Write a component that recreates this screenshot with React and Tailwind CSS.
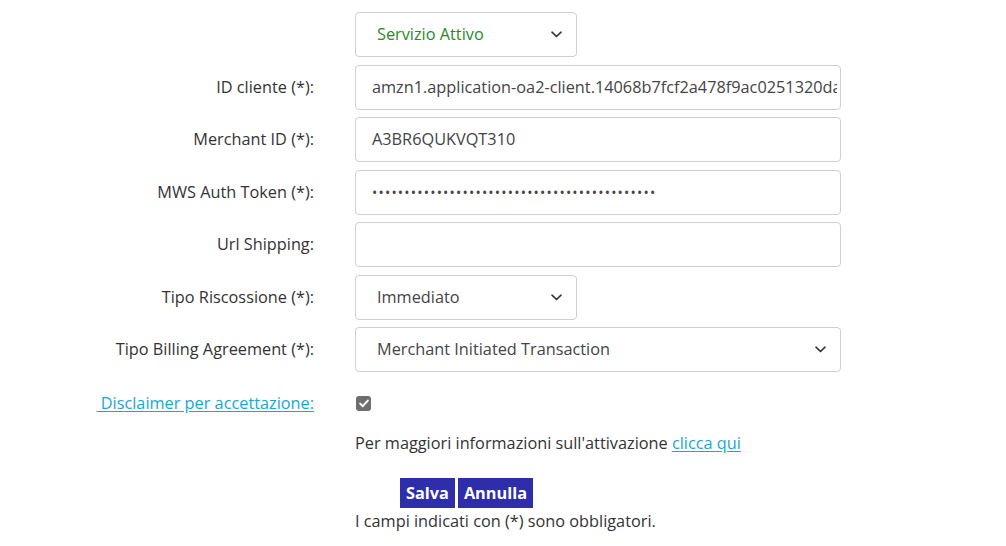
import React from 'react';

const Chevron = () => (
  <svg width="11" height="7" viewBox="0 0 11 7" className="shrink-0">
    <path d="M1 1.2 L5.5 5.5 L10 1.2" fill="none" stroke="#333" strokeWidth="1.6" strokeLinecap="round" />
  </svg>
);

const Select = ({ value, wide, green }) => (
  <div
    className={`flex h-[45px] items-center justify-between rounded-[4px] border border-[#cfcfcf] bg-white pl-[21px] pr-[14px] ${wide ? 'w-[486px]' : 'w-[222px]'}`}
  >
    <span className={green ? 'text-[#2a8a1f]' : 'text-[#444]'}>{value}</span>
    <Chevron />
  </div>
);

const TextInput = ({ value, password }) => (
  <div className="flex h-[45px] w-[486px] items-center overflow-hidden whitespace-nowrap rounded-[4px] border border-[#cfcfcf] bg-white pl-[16px] pr-[3px] text-[#444]">
    {password ? (
      <span className="text-[14px] tracking-[1.2px] text-[#444]">{'•'.repeat(44)}</span>
    ) : (
      <span className="block w-full overflow-hidden">{value}</span>
    )}
  </div>
);

const Row = ({ label, children }) => (
  <div className="flex items-center">
    <div className="w-[315px] pr-[1px] text-right text-[#333]">{label}</div>
    <div className="ml-[40px]">{children}</div>
  </div>
);

const fields = [
  { label: 'ID cliente (*):', value: 'amzn1.application-oa2-client.14068b7fcf2a478f9ac0251320da6e8b' },
  { label: 'Merchant ID (*):', value: 'A3BR6QUKVQT310' },
  { label: 'MWS Auth Token (*):', password: true },
  { label: 'Url Shipping:', value: '' },
];

export default function App() {
  return (
    <div className="min-h-[546px] w-[1006px] bg-white pt-[12px] font-['Open_Sans','Noto_Sans',sans-serif] text-[16.3px] text-[#333]">
      <div className="flex flex-col gap-[7.5px]">
        <Row label="">
          <Select value="Servizio Attivo" green />
        </Row>
        {fields.map((f) => (
          <Row key={f.label} label={f.label}>
            <TextInput value={f.value} password={f.password} />
          </Row>
        ))}
        <Row label="Tipo Riscossione (*):">
          <Select value="Immediato" />
        </Row>
        <Row label="Tipo Billing Agreement (*):">
          <Select value="Merchant Initiated Transaction" wide />
        </Row>
      </div>

      <div className="mt-[19px] flex items-center">
        <div className="w-[315px] pr-[1px] text-right">
          <a href="#" className="whitespace-pre text-[#1aa6d4] underline underline-offset-2">
            {' Disclaimer per accettazione:'}
          </a>
        </div>
        <div className="ml-[41px] flex h-[15px] w-[15px] items-center justify-center rounded-[3px] bg-[#6e6e6e]">
          <svg width="10" height="9" viewBox="0 0 10 9">
            <path d="M1.2 4.6 L3.8 7.2 L8.8 1.6" fill="none" stroke="#fff" strokeWidth="2" strokeLinecap="round" strokeLinejoin="round" />
          </svg>
        </div>
      </div>

      <div className="ml-[355px] mt-[16px] leading-[24px]">
        Per maggiori informazioni sull'attivazione{' '}
        <a href="#" className="text-[#1aa6d4] underline underline-offset-2">clicca qui</a>
      </div>

      <div className="ml-[400px] mt-[23px] flex gap-[3px]">
        <button className="h-[30px] bg-[#2e2eaa] px-[6px] font-bold text-white">Salva</button>
        <button className="h-[30px] bg-[#2e2eaa] px-[6px] font-bold text-white">Annulla</button>
      </div>
      <div className="ml-[355px] mt-[1px] leading-[24px]">I campi indicati con (*) sono obbligatori.</div>
    </div>
  );
}
